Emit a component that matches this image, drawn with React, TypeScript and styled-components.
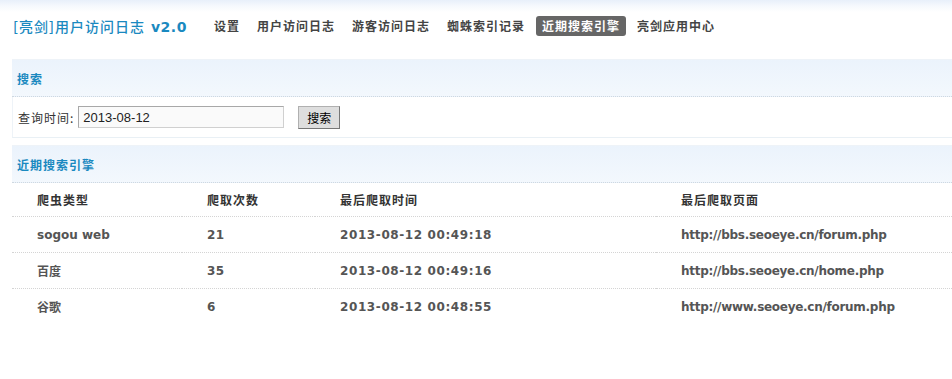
import React from 'react';
import styled, { createGlobalStyle } from 'styled-components';

const GlobalStyle = createGlobalStyle`
  html, body {
    margin: 0;
    padding: 0;
    background: #fff;
    overflow: hidden;
  }
  body {
    font-family: "Noto Sans CJK SC", "DejaVu Sans", sans-serif;
    font-size: 12px;
    color: #333;
  }
`;

const Page = styled.div`
  width: 952px;
  min-height: 379px;
`;

const Header = styled.div`
  height: 52px;
  display: flex;
  align-items: center;
  padding-left: 13px;
  background: linear-gradient(#e8f0fa 0, #f6f9fd 6px, #fff 12px);
`;

const Brand = styled.h1`
  margin: 0 21px 0 0;
  font-size: 14px;
  font-weight: 500;
  letter-spacing: 1px;
  color: #1a89c0;
  white-space: nowrap;
  font-family: "Noto Sans CJK SC", "DejaVu Sans", sans-serif;
`;

const Version = styled.span`
  font-family: "DejaVu Sans", sans-serif;
  font-weight: 700;
  letter-spacing: 0.5px;
  margin-left: 6px;
`;

const Nav = styled.nav`
  display: flex;
  align-items: center;
  gap: 5px;
`;

const NavItem = styled.a<{ $active?: boolean }>`
  display: block;
  padding: 0 6px;
  height: 20px;
  line-height: 20px;
  border-radius: 3px;
  font-size: 12px;
  font-weight: 700;
  letter-spacing: 1px;
  white-space: nowrap;
  color: ${p => (p.$active ? '#fff' : '#444')};
  background: ${p => (p.$active ? '#666' : 'transparent')};
  cursor: pointer;
`;

const Main = styled.div`
  padding: 7px 0 0 12px;
`;

const Section = styled.section`
  margin-bottom: 7px;
`;

const SectionTitle = styled.div`
  height: 36px;
  display: flex;
  align-items: center;
  padding-left: 5px;
  border-top: 1px solid #eef3f8;
  border-bottom: 1px dotted #cfd8e0;
  background: linear-gradient(#ebf3fc, #f3f8fd);
  color: #1a89c0;
  font-weight: 700;
  font-size: 12px;
  letter-spacing: 1px;
`;

const SearchRow = styled.div`
  height: 40px;
  display: flex;
  align-items: center;
  padding-left: 5px;
  border-left: 1px solid #eef3f8;
  border-bottom: 1px solid #e9f0f5;
`;

const Label = styled.label`
  color: #333;
  letter-spacing: 1px;
  margin-right: 4px;
`;

const DateInput = styled.input`
  width: 198px;
  height: 18px;
  padding: 1px 2px 1px 4px;
  border: 1px solid #a8a8a8;
  border-right-color: #d0d0d0;
  border-bottom-color: #d0d0d0;
  background: #fafafa;
  font-family: "Liberation Sans", Arial, sans-serif;
  font-size: 13px;
  color: #222;
  outline: none;
`;

const SearchButton = styled.button`
  margin-left: 14px;
  width: 42px;
  height: 23px;
  padding: 0;
  border: 1px solid #b0b0b0;
  border-right-color: #777;
  border-bottom-color: #777;
  background: #dedede;
  font-family: "Noto Sans CJK SC", sans-serif;
  font-size: 12px;
  color: #000;
  cursor: pointer;
`;

const Table = styled.div`
  display: grid;
  grid-template-columns: 170px 133px 341px 1fr;
`;

const Cell = styled.div<{ $head?: boolean; $last?: boolean; $spacing?: number }>`
  height: ${p => (p.$head ? '33px' : '35px')};
  display: flex;
  align-items: center;
  padding-left: 25px;
  border-bottom: ${p => (p.$last ? 'none' : '1px dotted #d4d4d4')};
  font-family: ${p =>
    p.$head
      ? '"Noto Sans CJK SC", sans-serif'
      : '"DejaVu Sans", "Noto Sans CJK SC", sans-serif'};
  font-size: 12px;
  font-weight: 700;
  letter-spacing: ${p => (p.$head ? 1 : p.$spacing ?? 0)}px;
  color: ${p => (p.$head ? '#333' : '#555')};
  white-space: nowrap;
`;

const navItems = ['设置', '用户访问日志', '游客访问日志', '蜘蛛索引记录', '近期搜索引擎', '亮剑应用中心'];

const columns = ['爬虫类型', '爬取次数', '最后爬取时间', '最后爬取页面'];

// letter spacing per data column, to match the original bitmap font widths
const columnSpacing = [0, 0.5, 0.6, -0.28];

const rows = [
  ['sogou web', '21', '2013-08-12 00:49:18', 'http://bbs.seoeye.cn/forum.php'],
  ['百度', '35', '2013-08-12 00:49:16', 'http://bbs.seoeye.cn/home.php'],
  ['谷歌', '6', '2013-08-12 00:48:55', 'http://www.seoeye.cn/forum.php'],
];

const App: React.FC = () => {
  return (
    <Page>
      <GlobalStyle />
      <Header>
        <Brand>
          [亮剑]用户访问日志<Version>v2.0</Version>
        </Brand>
        <Nav>
          {navItems.map(item => (
            <NavItem key={item} $active={item === '近期搜索引擎'}>
              {item}
            </NavItem>
          ))}
        </Nav>
      </Header>

      <Main>
        <Section>
          <SectionTitle>搜索</SectionTitle>
          <SearchRow>
            <Label htmlFor="date">查询时间:</Label>
            <DateInput id="date" defaultValue="2013-08-12" />
            <SearchButton>搜索</SearchButton>
          </SearchRow>
        </Section>

        <Section>
          <SectionTitle>近期搜索引擎</SectionTitle>
          <Table>
            {columns.map(col => (
              <Cell key={col} $head>
                {col}
              </Cell>
            ))}
            {rows.map((row, i) =>
              row.map((value, j) => (
                <Cell
                  key={`${i}-${j}`}
                  $last={i === rows.length - 1}
                  $spacing={columnSpacing[j]}
                >
                  {value}
                </Cell>
              ))
            )}
          </Table>
        </Section>
      </Main>
    </Page>
  );
};

export default App;
